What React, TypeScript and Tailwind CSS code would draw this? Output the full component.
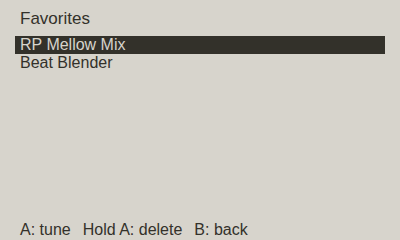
export default function App() {
  const items = ["RP Mellow Mix", "Beat Blender"];
  const selected = 0;

  return (
    <div className="h-[240px] w-[400px] bg-[#d7d4cc] text-[#33312a] font-['Liberation_Sans',Arial,sans-serif] text-[16px] leading-[18px] flex flex-col px-[15px] pt-[10px] overflow-hidden">
      <div className="pl-[5px] text-[17px]">Favorites</div>
      <div className="mt-[8px] flex flex-col">
        {items.map((name, i) => (
          <div
            key={name}
            className={
              i === selected
                ? "h-[18px] pl-[5px] bg-[#33312a] text-[#d7d4cc]"
                : "h-[18px] pl-[5px]"
            }
          >
            {name}
          </div>
        ))}
      </div>
      <div className="mt-auto mb-[1px] pl-[5px] flex gap-[12px]">
        <span>A: tune</span>
        <span>Hold A: delete</span>
        <span>B: back</span>
      </div>
    </div>
  );
}
